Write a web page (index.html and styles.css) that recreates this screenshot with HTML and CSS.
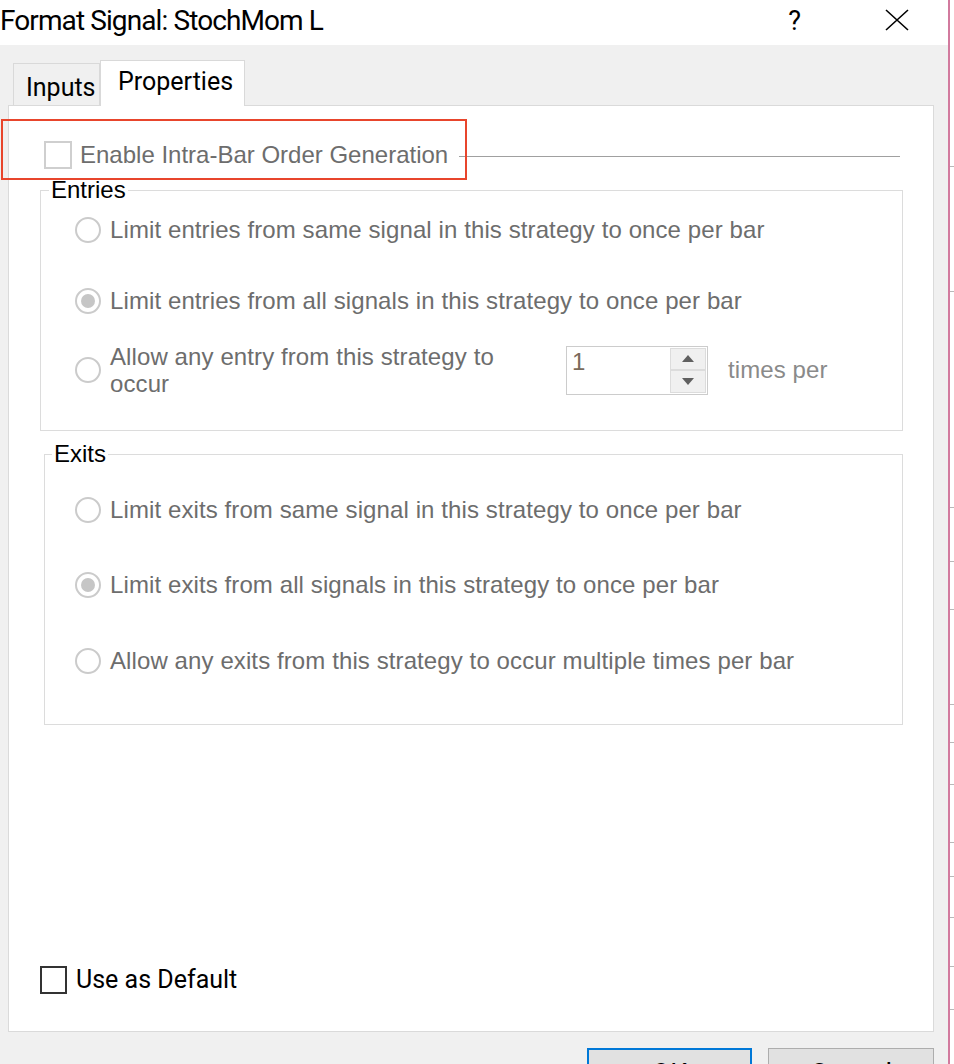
FILE: index.html
```html
<!DOCTYPE html>
<html lang="en">

<head>
    <meta charset="UTF-8" />
    <meta name="viewport" content="width=device-width, initial-scale=1.0" />
    <title>Format Signal: StochMom L</title>
    <link rel="stylesheet" href="styles.css">
</head>

<body>
    <div class="screen">
        <div class="dialog">
            <div class="titlebar">
                <span class="title">Format Signal: StochMom L</span>
                <span class="help">?</span>
                <svg class="close" width="24" height="22" viewBox="0 0 24 22">
                    <path d="M1 1 L23 21 M23 1 L1 21" stroke="#000" stroke-width="1.6" fill="none" />
                </svg>
            </div>

            <div class="dlg-body">
                <div class="tabs">
                    <div class="tab">Inputs</div>
                    <div class="tab active">Properties</div>
                </div>

                <div class="panel">
                    <div class="mark"></div>

                    <div class="intra">
                        <span class="check disabled"></span>
                        <span class="intra-label">Enable Intra-Bar Order Generation</span>
                        <span class="rule"></span>
                    </div>

                    <fieldset class="group entries">
                        <legend>Entries</legend>
                        <div class="opt first">
                            <span class="radio"></span>
                            <span>Limit entries from same signal in this strategy to once per bar</span>
                        </div>
                        <div class="opt second">
                            <span class="radio on"></span>
                            <span>Limit entries from all signals in this strategy to once per bar</span>
                        </div>
                        <div class="opt third">
                            <span class="radio"></span>
                            <span class="wrap-label">Allow any entry from this strategy to occur</span>
                            <div class="spin">
                                <span class="spin-val">1</span>
                                <div class="spin-btns">
                                    <span class="spin-btn"><i class="arr up"></i></span>
                                    <span class="spin-btn"><i class="arr down"></i></span>
                                </div>
                            </div>
                            <span class="times">times per</span>
                        </div>
                    </fieldset>

                    <fieldset class="group exits">
                        <legend>Exits</legend>
                        <div class="opt first">
                            <span class="radio"></span>
                            <span>Limit exits from same signal in this strategy to once per bar</span>
                        </div>
                        <div class="opt second">
                            <span class="radio on"></span>
                            <span>Limit exits from all signals in this strategy to once per bar</span>
                        </div>
                        <div class="opt third">
                            <span class="radio"></span>
                            <span>Allow any exits from this strategy to occur multiple times per bar</span>
                        </div>
                    </fieldset>

                    <div class="default-row">
                        <span class="check dark"></span>
                        <span>Use as Default</span>
                    </div>
                </div>

                <div class="buttons">
                    <button class="btn primary">OK</button>
                    <button class="btn">Cancel</button>
                </div>
            </div>
        </div>

        <div class="edge"></div>

        <!-- window behind the dialog -->
        <div class="behind">
            <div class="row-line" style="margin-top: 166px"></div>
            <div class="row-line" style="margin-top: 124px"></div>
            <div class="row-line" style="margin-top: 215px"></div>
            <div class="row-line" style="margin-top: 53px"></div>
            <div class="row-line" style="margin-top: 47px"></div>
            <div class="row-line" style="margin-top: 94px"></div>
            <div class="row-line" style="margin-top: 37px"></div>
            <div class="row-line" style="margin-top: 41px"></div>
            <div class="row-line" style="margin-top: 57px"></div>
            <div class="row-line" style="margin-top: 33px"></div>
            <div class="row-line" style="margin-top: 40px"></div>
            <div class="row-line" style="margin-top: 48px"></div>
            <div class="row-line" style="margin-top: 42px"></div>
        </div>
    </div>
</body>

</html>
```

FILE: styles.css
```css
* {
    box-sizing: border-box;
}

body {
    margin: 0;
    background: #fff;
    font-family: "Liberation Sans", Arial, sans-serif;
}

.screen {
    display: flex;
    width: 954px;
    height: 1064px;
    overflow: hidden;
}

.dialog {
    width: 948px;
    flex: none;
    display: flex;
    flex-direction: column;
    background: #f0f0f0;
}

.edge {
    width: 2px;
    flex: none;
    background: #d27a9e;
}

.behind {
    flex: 1;
    display: flex;
    flex-direction: column;
    background: #fff;
}

.row-line {
    height: 1px;
    background: #b8b8b8;
}

/* title bar */
.titlebar {
    height: 45px;
    flex: none;
    display: flex;
    align-items: center;
    background: #fff;
    font-family: Roboto, sans-serif;
    color: #000;
}

.title {
    font-size: 28px;
    letter-spacing: -0.9px;
    margin-top: -4px;
}

.help {
    margin-left: auto;
    font-size: 27px;
    margin-top: -4px;
}

.close {
    margin: -5px 39px 0 84px;
}

.dlg-body {
    flex: 1;
    padding: 15px 14px 0 8px;
}

/* tabs */
.tabs {
    display: flex;
    align-items: flex-end;
    padding-left: 5px;
    font-family: Roboto, sans-serif;
    font-size: 25px;
    color: #000;
}

.tab {
    height: 42px;
    width: 87px;
    padding: 9px 0 0 12px;
    border: 1px solid #d9d9d9;
    border-bottom: none;
    background: #f0f0f0;
}

.tab.active {
    height: 46px;
    width: 145px;
    padding: 6px 0 0 17px;
    margin-bottom: -1px;
    background: #fff;
    position: relative;
    z-index: 1;
}

.panel {
    position: relative;
    height: 927px;
    display: flex;
    flex-direction: column;
    background: #fff;
    border: 1px solid #dadada;
    font-size: 24px;
    color: #6d6d6d;
}

/* red outline drawn around the intra-bar option */
.mark {
    position: absolute;
    left: -8px;
    top: 13px;
    width: 466px;
    height: 61px;
    border: 2px solid #e8452c;
}

.check {
    width: 28px;
    height: 28px;
    flex: none;
    border: 2px solid #cfcfcf;
    background: #fff;
}

.intra {
    display: flex;
    align-items: center;
    margin-top: 35px;
    padding-left: 35px;
}

.intra-label {
    margin-left: 8px;
}

.rule {
    flex: 1;
    height: 1px;
    margin: 2px 33px 0 11px;
    background: #a0a0a0;
}

/* group boxes */
.group {
    margin: 9px 0 0 31px;
    width: 863px;
    padding: 0 0 33px 34px;
    border: 1px solid #dcdcdc;
}

.group legend {
    margin-left: -26px;
    padding: 0 2px;
    line-height: 24px;
    color: #000;
}

.group.exits {
    margin: 11px 0 0 35px;
    width: 859px;
    padding: 0 0 48px 30px;
}

.group.exits legend {
    margin-left: -23px;
}

.opt {
    display: flex;
    align-items: center;
    height: 30px;
    letter-spacing: 0.1px;
}

.entries .first {
    margin-top: 13px;
}

.entries .second {
    margin-top: 41px;
}

.entries .third {
    margin-top: 27px;
    height: 54px;
}

.exits .first {
    margin-top: 29px;
}

.exits .second {
    margin-top: 45px;
}

.exits .third {
    margin-top: 46px;
}

.radio {
    width: 26px;
    height: 26px;
    flex: none;
    margin-right: 9px;
    border: 2px solid #cbcbcb;
    border-radius: 50%;
    display: flex;
    align-items: center;
    justify-content: center;
}

.radio.on::after {
    content: "";
    width: 14px;
    height: 14px;
    border-radius: 50%;
    background: #c6c6c6;
}

.wrap-label {
    width: 420px;
    line-height: 27px;
}

/* numeric spinner */
.spin {
    width: 142px;
    height: 49px;
    margin: 0 0 0 36px;
    display: flex;
    border: 1px solid #cccccc;
    background: #fff;
}

.spin-val {
    flex: 1;
    padding: 4px 0 0 5px;
    line-height: 22px;
    color: #7a6a5a;
}

.spin-btns {
    width: 37px;
    display: flex;
    flex-direction: column;
    padding: 1px 1px 1px 0;
}

.spin-btn {
    flex: 1;
    display: flex;
    align-items: center;
    justify-content: center;
    background: #f0f0f0;
    border: 1px solid #dcdcdc;
}

.arr {
    width: 0;
    height: 0;
    border-left: 6px solid transparent;
    border-right: 6px solid transparent;
}

.arr.up {
    border-bottom: 7px solid #606060;
}

.arr.down {
    border-top: 7px solid #606060;
}

.times {
    margin-left: 20px;
    color: #8a8a8a;
}

.default-row {
    margin-top: auto;
    margin-bottom: 37px;
    padding-left: 31px;
    display: flex;
    align-items: center;
    font-family: Roboto, sans-serif;
    font-size: 25px;
    color: #000;
}

.check.dark {
    width: 27px;
    border-color: #333;
    margin-right: 9px;
}

/* dialog buttons */
.buttons {
    display: flex;
    justify-content: flex-end;
    gap: 16px;
    margin-top: 16px;
}

.btn {
    width: 166px;
    height: 46px;
    padding: 6px 0 0;
    border: 1px solid #adadad;
    background: #e1e1e1;
    font-family: Roboto, sans-serif;
    font-size: 27px;
    color: #000;
    text-align: center;
    vertical-align: top;
}

.btn.primary {
    width: 165px;
    border: 2px solid #0078d7;
}
```
